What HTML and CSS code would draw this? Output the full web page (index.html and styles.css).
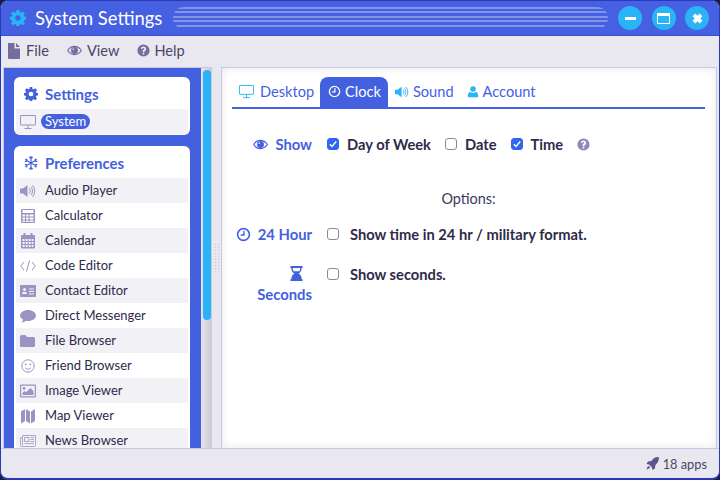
FILE: index.html
```html
<!DOCTYPE html>
<html>
<head>
    <title>System Settings</title>
    <link rel="stylesheet" href="styles.css">
</head>
<body>
    <svg class="defs" width="0" height="0">
        <symbol id="i-gear" viewBox="0 0 16 16"><path fill-rule="evenodd" d="M6.600 0h2.800l.4 2.200 1.200.5 1.900-1.300 2 2-1.300 1.900.5 1.200 2.200.4v2.800l-2.200.4-.5 1.200 1.300 1.900-2 2-1.900-1.300-1.200.5-.4 2.200H6.600l-.4-2.200-1.200-.5-1.900 1.300-2-2 1.300-1.900-.5-1.200L-.3 9.700V6.900l2.200-.4.5-1.200L1.100 3.400l2-2L5 2.700l1.200-.5zM8 5.300a2.700 2.700 0 1 0 0 5.400 2.700 2.700 0 0 0 0-5.400z"/></symbol>
        <symbol id="i-monitor" viewBox="0 0 16 16"><path fill="none" stroke="currentColor" d="M1 1.500h14a.5.500 0 0 1 .5.500v8.500a.5.500 0 0 1-.5.500H1a.5.500 0 0 1-.5-.5V2a.5.500 0 0 1 .5-.5zM8 11v3M4.500 14.500h7"/></symbol>
        <symbol id="i-eye" viewBox="0 0 16 16"><path fill="none" stroke="currentColor" stroke-width="1.300" d="M.8 8C2.500 5.300 5 3.700 8 3.700s5.500 1.600 7.200 4.300c-1.700 2.700-4.200 4.300-7.200 4.300S2.500 10.700.8 8z"/><path fill-rule="evenodd" d="M8 4.300a3.700 3.700 0 1 1 0 7.400 3.700 3.700 0 0 1 0-7.400zM7.600 5.600a1.900 1.900 0 0 0-1.900 1.900h1.100c0-.5.300-.8.800-.8z"/></symbol>
        <symbol id="i-file" viewBox="0 0 16 16"><path d="M2 0h6.500v5.500H14V15a1 1 0 0 1-1 1H3a1 1 0 0 1-1-1zM10 0l4 4h-4z"/></symbol>
        <symbol id="i-help" viewBox="0 0 16 16"><path fill-rule="evenodd" d="M8 .5a7.500 7.500 0 1 1 0 15A7.500 7.500 0 0 1 8 .5zM7 11v2h2v-2zM8 3c-1.800 0-3 .9-3.400 2.500l1.900.5c.2-.7.600-1.100 1.400-1.100.7 0 1.100.3 1.100.8 0 .5-.4.8-1 1.200-.8.500-1 1-1 1.700V10h2v-.3c0-.3.100-.5.600-.8 1-.6 1.600-1.300 1.600-2.400C11.200 4 10 3 8 3z"/></symbol>
        <symbol id="i-snow" viewBox="0 0 16 16"><path fill="none" stroke="currentColor" stroke-width="1.300" d="M8 0v16M1.100 4l13.800 8M1.100 12l13.800-8M6 1l2 2 2-2M6 15l2-2 2 2M.900 6.500l2.700-.7-.7-2.700M15.100 9.500l-2.700.7.700 2.700M.900 9.500l2.700.7-.7 2.700M15.100 6.500l-2.700-.7.700-2.700"/></symbol>
        <symbol id="i-sound" viewBox="0 0 16 16"><path d="M0 5.500h3L7.500 2v12L3 10.500H0z"/><path fill="none" stroke="currentColor" d="M9.200 5.500a3.500 3.500 0 0 1 0 5M10.800 3.800a6 6 0 0 1 0 8.400M12.400 2.200a8.500 8.500 0 0 1 0 11.600"/></symbol>
        <symbol id="i-calc" viewBox="0 0 16 16"><path fill-rule="evenodd" d="M2 1h12a1 1 0 0 1 1 1v12a1 1 0 0 1-1 1H2a1 1 0 0 1-1-1V2a1 1 0 0 1 1-1zm.500 1v3h11V2zm0 4.500v2h2.500v-2zm3.500 0v2h2.500v-2zm3.500 0v2h4v-2zm-7 3v2h2.500v-2zm3.500 0v2h2.500v-2zm3.500 0v2h4v-2zm-7 3v1.500h2.500v-1.500zm3.500 0v1.500h2.500v-1.500zm3.500 0v1.500h4v-1.500z"/></symbol>
        <symbol id="i-cal" viewBox="0 0 16 16"><path fill-rule="evenodd" d="M3.500 0h2v2h5V0h2v2H14a1 1 0 0 1 1 1v11.500a1 1 0 0 1-1 1H2a1 1 0 0 1-1-1V3a1 1 0 0 1 1-1h1.500zM2.500 6v2h2.200V6zm3.200 0v2h2V6zm3 0v2h2V6zm3 0v2h1.800V6zm-9.200 3v2h2.200V9zm3.200 0v2h2V9zm3 0v2h2V9zm3 0v2h1.800V9zm-9.200 3v2h2.200v-2zm3.200 0v2h2v-2zm3 0v2h2v-2zm3 0v2h1.800v-2z"/></symbol>
        <symbol id="i-code" viewBox="0 0 16 16"><path fill="none" stroke="currentColor" d="M4 4L.8 8 4 12M12 4l3.200 4-3.200 4M9.500 2.500l-3 11"/></symbol>
        <symbol id="i-card" viewBox="0 0 16 16"><path fill-rule="evenodd" d="M1 2h14a1 1 0 0 1 1 1v10a1 1 0 0 1-1 1H1a1 1 0 0 1-1-1V3a1 1 0 0 1 1-1zm3.500 3a1.500 1.500 0 1 0 0 3 1.500 1.500 0 0 0 0-3zM2 11h5c0-1.500-1-2.300-2.500-2.300S2 9.500 2 11zm7-5.500v1h5v-1zm0 2.500v1h5V8zm0 2.500v1h5v-1z"/></symbol>
        <symbol id="i-chat" viewBox="0 0 16 16"><path d="M8 2c4.400 0 8 2.500 8 5.500S12.400 13 8 13c-.7 0-1.400-.1-2-.2C4.800 13.800 3.300 14.500 1.500 14.500c1-1 1.500-2 1.600-3C1.200 10.500 0 9.100 0 7.500 0 4.500 3.600 2 8 2z"/></symbol>
        <symbol id="i-folder" viewBox="0 0 16 16"><path d="M1.500 2h4l1.500 2h6.500A1.500 1.500 0 0 1 15 5.500v7a1.500 1.500 0 0 1-1.500 1.500h-12A1.500 1.500 0 0 1 0 12.500v-9A1.500 1.500 0 0 1 1.500 2z"/></symbol>
        <symbol id="i-smile" viewBox="0 0 16 16"><circle cx="8" cy="8" r="6.200" fill="none" stroke="currentColor"/><circle cx="5.800" cy="6.300" r=".9"/><circle cx="10.200" cy="6.300" r=".9"/><path fill="none" stroke="currentColor" d="M5 9.800c1.600 1.800 4.400 1.800 6 0"/></symbol>
        <symbol id="i-image" viewBox="0 0 16 16"><path fill-rule="evenodd" d="M1 1.500h14a1 1 0 0 1 1 1v11a1 1 0 0 1-1 1H1a1 1 0 0 1-1-1v-11a1 1 0 0 1 1-1zm.200 1.200v10.600h13.600V2.700zM4 4a1.400 1.400 0 1 1 0 2.800A1.400 1.400 0 0 1 4 4zM2.500 12V9.800L4.500 8l1.500 1.300L10.500 5l3 3.200V12z"/></symbol>
        <symbol id="i-map" viewBox="0 0 16 16"><path d="M1 3.500L5 1v12l-4 2.500zM6 1l4 2.500v12L6 13zM11 3.500L15 1v12l-4 2.500z"/></symbol>
        <symbol id="i-news" viewBox="0 0 16 16"><path fill="none" stroke="currentColor" stroke-width=".8" d="M2.500 2.500h13v10a1 1 0 0 1-1 1H1.500a1 1 0 0 1-1-1V4.500h2zM2.500 4.500v8M4.500 4.500h4.500v4H4.500zM10.500 4.500h3.500M10.500 6.500h3.500M10.500 8.500h3.500M4.500 10.500h9.500"/></symbol>
        <symbol id="i-clock" viewBox="0 0 16 16"><circle cx="8" cy="8" r="6.300" fill="none" stroke="currentColor" stroke-width="1.700"/><path fill="none" stroke="currentColor" stroke-width="1.500" d="M8.500 4v4.500H5"/></symbol>
        <symbol id="i-user" viewBox="0 0 16 16"><circle cx="8" cy="4" r="3.700"/><path d="M2 15c-.7 0-1-.5-1-1.200C1 10.500 2.300 8 4.700 8c1 .8 2 1.200 3.300 1.200S10.300 8.800 11.300 8c2.400 0 3.700 2.500 3.700 5.800 0 .7-.3 1.200-1 1.200z"/></symbol>
        <symbol id="i-glass" viewBox="0 0 16 16"><path fill-rule="evenodd" d="M1.500 0h13v2h-1c0 3-1.500 5-3.200 6 1.700 1 3.200 3 3.200 6h1v2h-13v-2h1c0-3 1.500-5 3.200-6C3.900 7 2.500 5 2.500 2h-1zm2.500 2c0 1.300.4 2.500 1 3.500h6c.6-1 1-2.200 1-3.500z"/></symbol>
        <symbol id="i-rocket" viewBox="0 0 16 16"><path d="M15.800.2c.3 3.500-.8 6.500-3.500 9.100L11.500 10l-.5 4-3 2-.7-3.200-3.600-3.600L.500 8.500l2-3 4-.5.700-.800C9.800 1 12.300-.1 15.800.200zM3 11c1 .2 1.800 1 2 2-1 1.500-3 2-4.500 2.500C1 14 1.500 12 3 11z"/></symbol>
        <symbol id="i-check" viewBox="0 0 12 12"><path fill="none" stroke="currentColor" stroke-width="1.700" d="M2.200 6.300l2.700 2.700 4.900-6"/></symbol>
    </svg>

    <div class="window">
        <div class="titlebar">
            <svg class="title-icon"><use href="#i-gear"/></svg>
            <span class="title">System Settings</span>
            <div class="stripes"></div>
            <div class="controls">
                <button class="ctl"><span class="ctl-min"></span></button>
                <button class="ctl"><span class="ctl-max"></span></button>
                <button class="ctl">
                    <svg class="ctl-x" viewBox="0 0 10 10"><path d="M0.500 3l2.500-2.500 2 2 2-2L9.500 3l-2 2 2 2L7 9.500l-2-2-2 2L.5 7l2-2z"/></svg>
                </button>
            </div>
        </div>

        <div class="menubar">
            <span class="menu-item"><svg class="menu-icon file-icon"><use href="#i-file"/></svg>File</span>
            <span class="menu-item eye-item"><svg class="menu-icon eye-icon"><use href="#i-eye"/></svg>View</span>
            <span class="menu-item"><svg class="menu-icon"><use href="#i-help"/></svg>Help</span>
        </div>

        <div class="main">
            <div class="sidebar">
                <div class="side-scroll">
                    <div class="card">
                        <div class="card-head"><svg class="head-icon"><use href="#i-gear"/></svg>Settings</div>
                        <div class="row row-alt">
                            <svg class="row-icon"><use href="#i-monitor"/></svg>
                            <span class="row-label selected">System</span>
                        </div>
                    </div>
                    <div class="card">
                        <div class="card-head"><svg class="head-icon"><use href="#i-snow"/></svg>Preferences</div>
                        <div class="row row-alt"><svg class="row-icon"><use href="#i-sound"/></svg><span class="row-label">Audio Player</span></div>
                        <div class="row"><svg class="row-icon"><use href="#i-calc"/></svg><span class="row-label">Calculator</span></div>
                        <div class="row row-alt"><svg class="row-icon"><use href="#i-cal"/></svg><span class="row-label">Calendar</span></div>
                        <div class="row"><svg class="row-icon"><use href="#i-code"/></svg><span class="row-label">Code Editor</span></div>
                        <div class="row row-alt"><svg class="row-icon"><use href="#i-card"/></svg><span class="row-label">Contact Editor</span></div>
                        <div class="row"><svg class="row-icon"><use href="#i-chat"/></svg><span class="row-label">Direct Messenger</span></div>
                        <div class="row row-alt"><svg class="row-icon"><use href="#i-folder"/></svg><span class="row-label">File Browser</span></div>
                        <div class="row"><svg class="row-icon"><use href="#i-smile"/></svg><span class="row-label">Friend Browser</span></div>
                        <div class="row row-alt"><svg class="row-icon"><use href="#i-image"/></svg><span class="row-label">Image Viewer</span></div>
                        <div class="row"><svg class="row-icon"><use href="#i-map"/></svg><span class="row-label">Map Viewer</span></div>
                        <div class="row row-alt"><svg class="row-icon"><use href="#i-news"/></svg><span class="row-label">News Browser</span></div>
                    </div>
                </div>
                <div class="scrollbar"><div class="thumb"></div></div>
            </div>

            <div class="splitter"><div class="grip"></div></div>

            <div class="content">
                <div class="tabs">
                    <span class="tab"><svg class="tab-icon desk-icon"><use href="#i-monitor"/></svg>Desktop</span>
                    <span class="tab tab-active"><svg class="tab-icon"><use href="#i-clock"/></svg>Clock</span>
                    <span class="tab"><svg class="tab-icon"><use href="#i-sound"/></svg>Sound</span>
                    <span class="tab"><svg class="tab-icon user-icon"><use href="#i-user"/></svg>Account</span>
                </div>

                <div class="form-row show-row">
                    <div class="form-label"><svg class="label-icon eye-label"><use href="#i-eye"/></svg>Show</div>
                    <div class="form-fields">
                        <span class="check checked"><svg><use href="#i-check"/></svg></span><span class="field">Day of Week</span>
                        <span class="check"></span><span class="field">Date</span>
                        <span class="check checked"><svg><use href="#i-check"/></svg></span><span class="field">Time</span>
                        <svg class="hint"><use href="#i-help"/></svg>
                    </div>
                </div>

                <div class="options">Options:</div>

                <div class="form-row hour-row">
                    <div class="form-label"><svg class="label-icon"><use href="#i-clock"/></svg>24 Hour</div>
                    <div class="form-fields">
                        <span class="check"></span><span class="field">Show time in 24 hr / military format.</span>
                    </div>
                </div>

                <div class="form-row seconds-row">
                    <div class="form-label stacked"><svg class="label-icon"><use href="#i-glass"/></svg>Seconds</div>
                    <div class="form-fields">
                        <span class="check"></span><span class="field">Show seconds.</span>
                    </div>
                </div>
            </div>
        </div>

        <div class="statusbar">
            <svg class="status-icon"><use href="#i-rocket"/></svg>18 apps
        </div>
    </div>
</body>
</html>
```

FILE: styles.css
```css
html, body {
    margin: 0;
    padding: 0;
    background: #1b1b3a;
}

.defs {
    position: absolute;
}

svg {
    fill: currentColor;
    flex-shrink: 0;
}

.window {
    width: 720px;
    height: 480px;
    box-sizing: border-box;
    border: 1px solid #2b39b8;
    border-bottom-width: 2px;
    border-radius: 8px;
    background: #e9e8f0;
    display: flex;
    flex-direction: column;
    overflow: hidden;
    font-family: Lato, sans-serif;
    color: #2e2b4a;
}

.titlebar {
    height: 35px;
    box-sizing: border-box;
    background: #4560e0;
    border-bottom: 1px solid #3a50cc;
    display: flex;
    align-items: center;
    padding: 0 9px;
    flex-shrink: 0;
}

.title-icon {
    width: 16px;
    height: 16px;
    color: #2bb3f7;
}

.title {
    font-size: 18.4px;
    color: #fff;
    margin-left: 9px;
    padding-bottom: 1px;
    width: 138px;
    white-space: nowrap;
}

.stripes {
    width: 435px;
    height: 22px;
    border-radius: 11px;
    background: repeating-linear-gradient(#8393e8 0, #8393e8 2px, #4560e0 2px, #4560e0 4.4px);
}

.controls {
    display: flex;
    gap: 9.5px;
    margin-left: 10px;
}

.ctl {
    width: 24px;
    height: 24px;
    border: none;
    padding: 0;
    border-radius: 50%;
    background: #2bb3f7;
    display: flex;
    align-items: center;
    justify-content: center;
}

.ctl-min {
    width: 11px;
    height: 3px;
    background: #fff;
}

.ctl-max {
    width: 11px;
    height: 7px;
    border: 1.500px solid #fff;
    border-top-width: 3px;
}

.ctl-x {
    width: 11px;
    height: 11px;
    color: #fff;
}

.menubar {
    height: 31px;
    box-sizing: border-box;
    padding: 0 5px 2px;
    display: flex;
    align-items: center;
    gap: 18px;
    font-size: 14.6px;
    color: #4a4668;
    flex-shrink: 0;
}

.menu-item {
    display: flex;
    align-items: center;
    gap: 4px;
}

.eye-item {
    gap: 5px;
}

.menu-icon {
    width: 13px;
    height: 13px;
    color: #766d9f;
}

.file-icon {
    width: 16px;
    height: 16px;
}

.eye-icon {
    width: 15px;
    height: 15px;
}

.main {
    flex: 1;
    display: flex;
    min-height: 0;
    padding: 0 2px;
    border-bottom: 1px solid #c9c6e0;
}

.sidebar {
    width: 209px;
    display: flex;
    border-top: 1px solid #c9c6e0;
    border-left: 1px solid #c9c6e0;
    box-sizing: border-box;
    overflow: hidden;
    flex-shrink: 0;
}

.side-scroll {
    width: 197px;
    background: #4361df;
    box-sizing: border-box;
    padding: 9px 11px 0 10px;
    flex-shrink: 0;
}

.scrollbar {
    flex: 1;
    padding: 2px 1px 0 2px;
    background: linear-gradient(to right, #e6e5ee, #cbc9d8);
}

.thumb {
    height: 250px;
    border-radius: 4px;
    background: #2bb3f7;
}

.card {
    background: #fff;
    border-radius: 6px;
    padding: 0 2px 1px;
    margin-bottom: 11px;
}

.card-head {
    height: 32px;
    box-sizing: border-box;
    padding: 1px 0 0 8px;
    display: flex;
    align-items: center;
    font-size: 15px;
    font-weight: 700;
    color: #4361df;
}

.head-icon {
    width: 14px;
    height: 14px;
    margin-right: 7px;
}

.row {
    height: 25px;
    display: flex;
    align-items: center;
    font-size: 13px;
    padding-left: 4px;
}

.row-alt {
    background: #f2f1f6;
}

.row-icon {
    width: 16px;
    height: 16px;
    color: #9b94c2;
    margin-right: 9px;
}

.row-label {
    line-height: 15px;
}

.selected {
    background: #4361df;
    color: #fff;
    border-radius: 8px;
    padding: 0 4px;
    margin-left: -4px;
}

.splitter {
    width: 9px;
    display: flex;
    align-items: center;
    justify-content: center;
    flex-shrink: 0;
}

.grip {
    width: 6px;
    height: 30px;
    background-image: radial-gradient(#c9c7da 1px, transparent 1px);
    background-size: 3px 3px;
}

.content {
    flex: 1;
    background: #fff;
    border: 1px solid #c9c6e0;
    border-bottom: none;
    box-shadow: inset 0 0 8px rgba(60, 55, 90, 0.12);
    padding: 9px 11px 0 10px;
    min-width: 0;
}

.tabs {
    display: flex;
    border-bottom: 2px solid #4361df;
    height: 30px;
    font-size: 14.6px;
    color: #4361df;
}

.tab {
    display: flex;
    align-items: center;
    padding: 0 6px 1px 7px;
}

.tab-icon {
    width: 14px;
    height: 14px;
    color: #2bb3f7;
    margin-right: 4px;
}

.desk-icon {
    width: 15px;
    height: 15px;
    margin-right: 6px;
}

.user-icon {
    width: 12px;
    height: 12px;
}

.tab-active {
    background: #4361df;
    color: #fff;
    border-radius: 8px 8px 0 0;
    padding: 0 7px 1px 8px;
}

.tab-active .tab-icon {
    width: 13px;
    height: 13px;
    color: #fff;
}

.form-row {
    display: flex;
}

.show-row {
    margin-top: 23px;
    height: 24px;
    align-items: center;
}

.hour-row {
    margin-top: 14px;
    height: 24px;
    align-items: center;
}

.seconds-row {
    margin-top: 16px;
}

.form-label {
    width: 80px;
    display: flex;
    justify-content: flex-end;
    align-items: center;
    font-size: 14.8px;
    font-weight: 700;
    color: #4361df;
    flex-shrink: 0;
}

.label-icon {
    width: 15px;
    height: 15px;
    margin-right: 7px;
}

.stacked {
    flex-direction: column;
    align-items: flex-end;
    justify-content: flex-start;
    padding-top: 4px;
    gap: 4px;
    line-height: 18px;
}

.stacked .label-icon {
    margin: 0 8px 0 0;
}

.form-fields {
    display: flex;
    align-items: center;
    margin-left: 15px;
    height: 24px;
    font-size: 14.7px;
    font-weight: 700;
}

.check {
    width: 12px;
    height: 12px;
    box-sizing: border-box;
    border: 1px solid #8a8a92;
    border-radius: 3px;
    display: inline-flex;
    margin-right: 8px;
    background: #fff;
}

.check svg {
    width: 10px;
    height: 10px;
    color: #fff;
}

.checked {
    background: #3366f0;
    border-color: #3366f0;
}

.field {
    margin-right: 14px;
}

.hour-row .check, .seconds-row .check {
    margin-right: 11px;
}

.hint {
    width: 13px;
    height: 13px;
    color: #8f88b8;
}

.options {
    text-align: center;
    font-size: 14.4px;
    margin-top: 34px;
    line-height: 18px;
    color: #3d3a58;
}

.statusbar {
    height: 29px;
    display: flex;
    align-items: center;
    justify-content: flex-end;
    padding-right: 12px;
    font-size: 12.8px;
    color: #4a4668;
    flex-shrink: 0;
}

.status-icon {
    width: 13px;
    height: 13px;
    color: #5d5590;
    margin-right: 4px;
}
```
